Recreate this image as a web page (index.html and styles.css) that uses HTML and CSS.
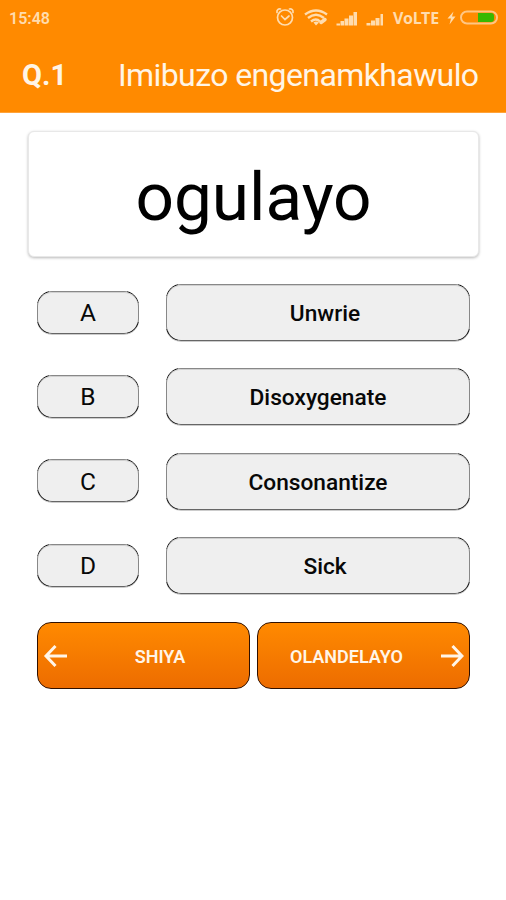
FILE: index.html
```html
<!DOCTYPE html>
<html lang="zu">
<head>
<meta charset="utf-8">
<title>Imibuzo engenamkhawulo</title>
<link rel="stylesheet" href="styles.css">
</head>
<body>
<header class="header">
  <div class="status">
    <span class="time">15:48</span>
    <svg class="status-icons" width="118" height="24" viewBox="0 0 118 24" fill="none" stroke="#ffdcae" stroke-width="1.700">
      <circle cx="11" cy="12.500" r="7.500"/>
      <path d="M3 7.500C2.500 5 4.500 3.500 6.500 4M19 7.500C19.500 5 17.500 3.500 15.500 4M7.500 11l3.500 3.500 4-3.500" stroke-linecap="round"/>
      <path d="M31 9.500Q42 1.500 53 9.500M34 13Q42 6.500 50 13M37 16.500Q42 12.500 46 16.500" stroke-width="2.400"/>
      <path d="M39.500 17.500L42 20.500l3-3Q42 15.500 39.500 17.500Z" fill="#ffdcae" stroke="none"/>
      <path d="M47 17.500l4-3" stroke-width="3.500" stroke-linecap="round"/>
      <path d="M62.500 18.500v2h3.500v-2zM66.500 16h3.500v4.500h-3.500zM70.500 13.500h4v7h-4zM75 10.500h4v10h-4zM79.500 7h3.500v13.500h-3.500z" fill="#ffdcae" stroke="none"/>
      <path d="M92.500 18v2.500h4V18zM97 15.500h4v5h-4zM101.500 13h4v7.500h-4zM106.500 9h2.500v11.500h-2.500z" fill="#ffdcae" stroke="none"/>
    </svg>
    <span class="network">VoLTE</span>
    <svg class="battery" width="52" height="18" viewBox="0 0 52 18">
      <path d="M7.500 2.500L1.500 9.500H5L3.500 15.500 9.500 7.500H6z" fill="#ffdcae"/>
      <rect x="15" y="2.500" width="36" height="12" rx="6" fill="none" stroke="#ffc684" stroke-width="2"/>
      <path d="M32 4h13a3 3 0 0 1 3 3v3a3 3 0 0 1-3 3H32z" fill="#39b800"/>
    </svg>
  </div>
  <div class="titlebar">
    <span class="number">Q.1</span>
    <h1 class="title">Imibuzo engenamkhawulo</h1>
  </div>
</header>
<main class="quiz">
  <section class="word">ogulayo</section>
  <div class="answers">
    <div class="answer"><span class="box letter">A</span><span class="box option short">Unwrie</span></div>
    <div class="answer"><span class="box letter">B</span><span class="box option">Disoxygenate</span></div>
    <div class="answer"><span class="box letter">C</span><span class="box option">Consonantize</span></div>
    <div class="answer"><span class="box letter">D</span><span class="box option short">Sick</span></div>
  </div>
  <nav class="actions">
    <div class="action">
      <svg width="24" height="24" viewBox="0 0 24 24"><path d="M12.500 2L3 12l9.500 10M3 12H24"/></svg>
      <span class="caption">SHIYA</span>
    </div>
    <div class="action">
      <span class="caption next">OLANDELAYO</span>
      <svg width="24" height="24" viewBox="0 0 24 24"><path d="M12.500 2L22 12 12.500 22M22 12H1"/></svg>
    </div>
  </nav>
</main>
</body>
</html>
```
FILE: styles.css
```css
* { box-sizing: border-box; }
body { margin: 0; background: #fff; color: #080808; font-family: Roboto, sans-serif; }
.header { height: 113px; background: #ff8a00; border-bottom: 1px solid #ffa33a; color: #fff5e6; }
.status { display: flex; align-items: center; height: 36px; padding-left: 9px; color: #ffdcae; }
.time { width: 265px; font-size: 16px; font-weight: 600; }
.status-icons { flex: none; overflow: visible; margin-top: -3px; }
.network { width: 54px; padding-left: 1px; font-family: "Noto Sans", sans-serif; font-size: 16px; font-weight: 700; line-height: 20px; letter-spacing: -.2px; }
.battery { flex: none; }
.titlebar { display: flex; align-items: center; height: 78px; padding-left: 22px; }
.number { width: 96px; font-size: 29px; font-weight: 700; }
.title { margin: 0; font-size: 32px; font-weight: 400; letter-spacing: -.6px; white-space: nowrap; }
.quiz { padding: 18px 27px 0 28px; }
.word { display: flex; justify-content: center; align-items: center; height: 126px; padding-top: 4px; border: 1px solid #e8e8e8; border-radius: 6px; background: #fff; box-shadow: 0 1px 3px rgba(0,0,0,.28); color: #000; font-size: 67.500px; }
.answers { display: grid; grid-auto-rows: 57px; gap: 27.400px; margin: 27px 9px 0 9px; }
.answer { display: flex; align-items: center; justify-content: space-between; }
.box {
  display: flex; align-items: center; justify-content: center;
  padding-top: 2px;
  border: 1px solid transparent; border-radius: 15px;
  background:
    linear-gradient(#efefef, #efefef) padding-box,
    linear-gradient(#888, #888) center top / calc(100% - 24px) 2px no-repeat border-box,
    linear-gradient(#666, #666) center bottom / calc(100% - 24px) 2px no-repeat border-box,
    linear-gradient(#888, #888) left center / 2px calc(100% - 24px) no-repeat border-box,
    linear-gradient(#888, #888) right center / 2px calc(100% - 24px) no-repeat border-box,
    linear-gradient(#111, #111) border-box;
  box-shadow: inset 0 1px #d0d0d0, 0 1px #ccc;
}
.letter { width: 102px; height: 43px; margin-top: -1px; padding-top: 1px; font-size: 24.500px; }
.option { width: 304px; height: 57px; font-size: 22.700px; font-weight: 500; }
.short { padding-left: 14px; }
.actions { display: grid; grid-template-columns: 213px 213px; gap: 7px; margin: 28px 0 0 9px; }
.action { display: flex; align-items: center; height: 67px; padding: 1px 5px 0; border: 1.500px solid #301000; border-radius: 14px; background: linear-gradient(#ff8a00, #ed6c00); }
.action svg { flex: none; fill: none; stroke: #fff5e8; stroke-width: 3; }
.caption { flex: 1; padding-left: 9px; text-align: center; color: #fff5e8; font-size: 18px; font-weight: 600; }
.next { padding: 0 10px 0 0; }
```
